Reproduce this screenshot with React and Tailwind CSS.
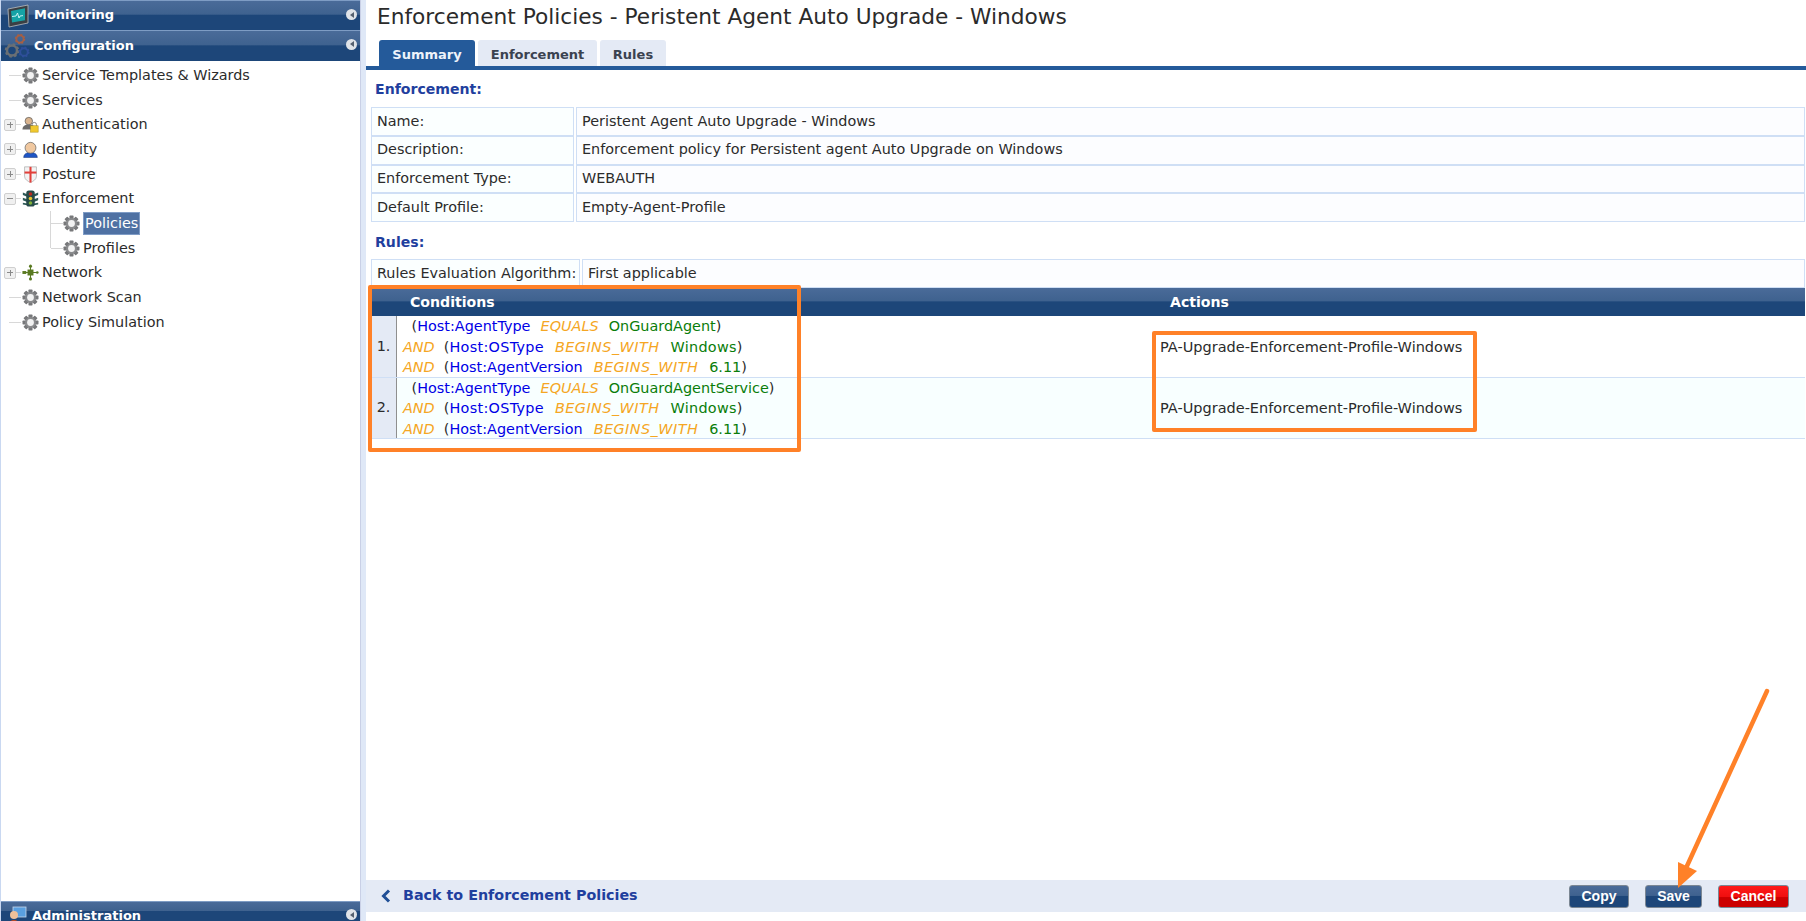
import React from "react";

const BAR = "bg-[linear-gradient(#4a6b99_0%,#3f628f_45%,#1d4679_50%,#1d4679_100%)]";

function Gear({ className = "" }) {
  const teeth = [0, 45, 90, 135, 180, 225, 270, 315];
  return (
    <svg viewBox="0 0 20 20" className={`w-[17px] h-[17px] shrink-0 ${className}`}>
      {teeth.map((a) => (
        <rect key={a} x="7.6" y="0.6" width="4.8" height="5" rx="0.8" fill="#77787a" transform={`rotate(${a} 10 10)`} />
      ))}
      <circle cx="10" cy="10" r="6.4" fill="#8a8b8d" />
      <circle cx="10" cy="10" r="4" fill="#f2f2f2" />
    </svg>
  );
}

function Expander({ minus }) {
  return (
    <span className="w-3 h-3 border border-[#cfcfcf] bg-[#f0f0f0] rounded-[2px] flex items-center justify-center relative shrink-0">
      <span className="w-[6px] h-px bg-[#8a8a8a]" />
      {!minus && <span className="absolute w-px h-[6px] bg-[#8a8a8a]" />}
    </span>
  );
}

function AuthIcon() {
  return (
    <svg viewBox="0 0 20 20" className="w-[17px] h-[17px] shrink-0">
      <circle cx="8" cy="6" r="4.4" fill="#d9b48f" stroke="#555" strokeWidth="0.8" />
      <path d="M0.5 16c0-4 3-6 7.5-6s7.5 2 7.5 6z" fill="#6b6b6b" />
      <rect x="10" y="11.5" width="9" height="7.5" fill="#f0c82e" stroke="#a98a12" strokeWidth="0.6" />
      <path d="M12 11.5V10a2.5 2.5 0 0 1 5 0v1.5" fill="none" stroke="#777" strokeWidth="1" />
    </svg>
  );
}

function IdentityIcon() {
  return (
    <svg viewBox="0 0 20 20" className="w-[17px] h-[17px] shrink-0">
      <path d="M2 19.5c0-4 3-6 8-6s8 2 8 6z" fill="#1f55c4" stroke="#123070" strokeWidth="0.6" />
      <circle cx="10" cy="8" r="6.4" fill="#f0c8a0" stroke="#5a5a5a" strokeWidth="0.8" />
    </svg>
  );
}

function PostureIcon() {
  return (
    <svg viewBox="0 0 20 20" className="w-[17px] h-[17px] shrink-0">
      <path d="M3 1h14v11c0 4-4 6-7 7.5-3-1.500-7-3.500-7-7.500z" fill="#f3f3f3" stroke="#a8a8a8" strokeWidth="0.8" />
      <rect x="8.800" y="1" width="2.400" height="18.500" fill="#e2403a" />
      <rect x="3" y="6.500" width="14" height="2.400" fill="#e2403a" />
    </svg>
  );
}

function TrafficIcon() {
  return (
    <svg viewBox="0 0 20 20" className="w-[17px] h-[17px] shrink-0">
      <path d="M1 3l5 2v3L1 6zM19 3l-5 2v3l5-2zM1 9l5 2v3L1 12zM19 9l-5 2v3l5-2zM1 15l5 1v2L1 17zM19 15l-5 1v2l5-1z" fill="#2f5a58" />
      <rect x="5" y="0.500" width="10" height="19" rx="3" fill="#274a48" />
      <circle cx="10" cy="4.800" r="2.100" fill="#b92a20" />
      <circle cx="10" cy="10" r="2.100" fill="#e9c52c" />
      <circle cx="10" cy="15.200" r="2.100" fill="#7fb23a" />
    </svg>
  );
}

function NetworkIcon() {
  return (
    <svg viewBox="0 0 20 20" className="w-[17px] h-[17px] shrink-0">
      <path d="M10 2v16M1.500 10h17" stroke="#5a7a22" strokeWidth="1.200" />
      <rect x="6.500" y="6.500" width="7" height="7" fill="#5a7a22" />
      <circle cx="10" cy="2.500" r="1.800" fill="#5a7a22" />
      <circle cx="10" cy="17.500" r="1.800" fill="#5a7a22" />
      <rect x="0.500" y="8.300" width="4.500" height="3.400" fill="#5a7a22" />
      <circle cx="18" cy="10" r="1.500" fill="#5a7a22" />
    </svg>
  );
}

function MonitorIcon() {
  return (
    <svg viewBox="0 0 22 24" className="w-[22px] h-[24px] shrink-0">
      <path d="M1 5l20-4v18L2 23z" fill="#3a3f44" stroke="#b9bcbf" strokeWidth="0.800" />
      <path d="M4 7l14-2.800v12L5 18.500z" fill="#15a3a6" />
      <path d="M5 12.500l4-.5 1.500-3 1.500 5 1-2 3-.4" fill="none" stroke="#d8fbfb" strokeWidth="0.900" />
    </svg>
  );
}

function GearsIcon() {
  const cog = (cx, cy, r, color) => (
    <g>
      <circle cx={cx} cy={cy} r={r} fill="none" stroke={color} strokeWidth={r * 0.5} />
      <circle cx={cx} cy={cy} r={r * 1.25} fill="none" stroke={color} strokeWidth={r * 0.4} strokeDasharray={`${r * 0.5} ${r * 0.48}`} />
    </g>
  );
  return (
    <svg viewBox="0 0 28 28" className="w-7 h-7 shrink-0">
      {cog(16, 7, 3.6, "#a85f42")}
      {cog(8, 18.500, 5, "#6a6f74")}
      {cog(20, 20, 3.8, "#2f4f9a")}
    </svg>
  );
}

function AdminIcon() {
  return (
    <svg viewBox="0 0 20 24" className="w-[20px] h-[24px] shrink-0">
      <rect x="6" y="1" width="13" height="10" fill="#5aa0e0" stroke="#c7d6ea" strokeWidth="0.800" />
      <circle cx="7" cy="9" r="4" fill="#eec09a" />
      <path d="M1 22c0-5 2-8 6-8s6 3 6 8z" fill="#c44a20" />
    </svg>
  );
}

function BarChevron() {
  return (
    <span className="w-[11px] h-[11px] rounded-full bg-[#dfe3e8] flex items-center justify-center shrink-0">
      <span className="w-0 h-0 border-y-[3px] border-y-transparent border-r-[4px] border-r-[#55606e]" />
    </span>
  );
}

function AccordionBar({ icon, label, className = "", iconW = "w-[33px]", labelClass = "", chevronClass = "" }) {
  return (
    <div className={`flex items-center border-t border-[#7e9cc4] ${BAR} pr-[2px] overflow-hidden ${className}`}>
      <div className={`${iconW} flex justify-center shrink-0`}>{icon}</div>
      <span className={`text-white font-bold text-[13px] flex-1 ${labelClass}`}>{label}</span>
      <span className={`mr-px ${chevronClass}`}><BarChevron /></span>
    </div>
  );
}

function TreeRow({ child, expander, icon, label, selected, vline }) {
  return (
    <div className="h-[24.7px] flex items-center relative">
      <div className={`${child ? "w-[62px] pl-[50px]" : expander ? "w-[21px] pl-[3px]" : "w-[21px] pl-[8px]"} flex items-center shrink-0`}>
        {expander && <Expander minus={expander === "minus"} />}
        <span className={`${expander ? "w-[5px]" : "w-3"} h-px bg-[#d8d8d8]`} />
      </div>
      {icon}
      <span className={`${child ? "ml-[3px]" : "ml-[3px]"} text-[14.4px] leading-[21px] ${selected ? "bg-[#4f71a3] text-white px-px border border-[#7f9cc6]" : "text-[#2b2b2b]"}`}>{label}</span>
      {vline === "full" && <span className="absolute left-[49px] top-0 bottom-0 w-px bg-[#d8d8d8]" />}
      {vline === "half" && <span className="absolute left-[49px] top-0 h-1/2 w-px bg-[#d8d8d8]" />}
    </div>
  );
}

function InfoRow({ k, v, w = "w-[203px]", h = "h-[28.8px]" }) {
  return (
    <div className={`flex gap-[2px] ${h} text-[14.4px] text-[#2b2b2b]`}>
      <div className={`${w} shrink-0 flex items-center pl-[5px] bg-[#fbffff] border border-[#cfdff5]`}>{k}</div>
      <div className="flex-1 flex items-center pl-[5px] bg-[#fcfdff] border border-[#cfdff5]">{v}</div>
    </div>
  );
}

function Cond({ prefix, attr, attrClass = "", op, opClass = "", val, valClass = "" }) {
  return (
    <div className="h-[20.3px] leading-[20px] whitespace-pre">
      {prefix ? <span className="text-[#f5a623] italic">AND</span> : <span className="inline-block w-[4px]" />}
      <span className="text-[#2b2b2b]">{prefix ? "  (" : " ("}</span>
      <span className={`text-[#0000e6] ${attrClass}`}>{attr}</span>
      <span className={`text-[#f5a623] italic mx-px ${opClass}`}>{"  " + op + "  "}</span>
      <span className={`text-[#0a7d0a] ${valClass}`}>{val}</span>
      <span className="text-[#2b2b2b]">)</span>
    </div>
  );
}

function Rule({ n, val, shaded }) {
  return (
    <div className={`flex h-[61.500px] border-b border-[#cfdff5] text-[14.4px] ${shaded ? "bg-[#f8ffff]" : "bg-white"}`}>
      <div className="w-[26px] shrink-0 bg-[#e4eaf5] border-r border-[#8f8f8f] flex items-center justify-center text-[#2b2b2b]">{n}.</div>
      <div className="w-[759px] shrink-0 pl-[6px]">
        <Cond attr="Host:AgentType" op="EQUALS" val={val} />
        <Cond prefix attr="Host:OSType" attrClass="tracking-[0.3px]" op="BEGINS_WITH" opClass="tracking-[0.45px]" val="Windows" valClass="tracking-[0.3px]" />
        <Cond prefix attr="Host:AgentVersion" op="BEGINS_WITH" opClass="tracking-[0.45px]" val="6.11" />
      </div>
      <div className="flex-1 flex items-center pl-[4px] pt-[2px] text-[#2b2b2b] text-[14.5px]">PA-Upgrade-Enforcement-Profile-Windows</div>
    </div>
  );
}

function Btn({ w, red, children }) {
  return (
    <button className={`${w} h-[23px] rounded-[3px] border border-[#7b8794] text-white font-bold text-[14px] ${red ? "bg-[linear-gradient(#ff1a1a_0%,#f00f0f_50%,#cc0000_55%,#cc0000_100%)]" : BAR}`} style={{ fontFamily: '"Liberation Sans", Arial, sans-serif' }}>
      {children}
    </button>
  );
}

export default function App() {
  return (
    <div className="h-screen w-full flex overflow-hidden bg-white relative" style={{ fontFamily: '"DejaVu Sans", Verdana, sans-serif' }}>
      {/* Sidebar */}
      <aside className="w-[361px] shrink-0 flex flex-col border-l border-[#c9d8f1] border-r border-r-[#c9d0e6]">
        <AccordionBar icon={<MonitorIcon />} label="Monitoring" className="h-[30px]" labelClass="-translate-y-px" chevronClass="-translate-y-px" />
        <AccordionBar icon={<GearsIcon />} label="Configuration" className="h-[31px]" chevronClass="-translate-y-[2px]" />
        <div className="flex-1 pt-[2px]">
          <TreeRow icon={<Gear />} label="Service Templates & Wizards" />
          <TreeRow icon={<Gear />} label="Services" />
          <TreeRow expander="plus" icon={<AuthIcon />} label="Authentication" />
          <TreeRow expander="plus" icon={<IdentityIcon />} label="Identity" />
          <TreeRow expander="plus" icon={<PostureIcon />} label="Posture" />
          <TreeRow expander="minus" icon={<TrafficIcon />} label="Enforcement" />
          <TreeRow child vline="full" icon={<Gear />} label="Policies" selected />
          <TreeRow child vline="half" icon={<Gear />} label="Profiles" />
          <TreeRow expander="plus" icon={<NetworkIcon />} label="Network" />
          <TreeRow icon={<Gear />} label="Network Scan" />
          <TreeRow icon={<Gear />} label="Policy Simulation" />
        </div>
        <AccordionBar icon={<AdminIcon />} label="Administration" iconW="w-[31px]" className="h-[20px] items-start pt-[4px]" labelClass="leading-[20px]" chevronClass="translate-y-[3px]" />
      </aside>
      <div className="w-[5px] shrink-0 bg-[#dfe8f7]" />

      {/* Main */}
      <main className="flex-1 min-w-0 flex flex-col pb-[9px]">
        <h1 className="pl-[11px] h-[40px] pt-[1px] text-[21.7px] leading-[32px] text-[#2b2b2b] font-normal whitespace-nowrap">
          Enforcement Policies - Peristent Agent Auto Upgrade - Windows
        </h1>
        <div className="flex pl-[13px] gap-[3px] h-[26px] text-[13px] font-bold">
          <div className="w-[96px] rounded-t-[3px] bg-[#245a9a] text-[#eef3fa] flex items-center justify-center pt-[3px]">Summary</div>
          <div className="w-[119px] rounded-t-[3px] bg-[#e4eaf5] text-[#3a4250] flex items-center justify-center pt-[3px]">Enforcement</div>
          <div className="w-[66px] rounded-t-[3px] bg-[#e4eaf5] text-[#3a4250] flex items-center justify-center pt-[3px]">Rules</div>
        </div>
        <div className="h-[4px] bg-[#245a9a]" />

        <div className="flex-1 min-h-0 pl-[5px] pr-[1px]">
          <h2 className="text-[14.1px] font-bold text-[#1f3f9e] h-[37px] pt-[9px] pl-[4px] leading-[20px]">Enforcement:</h2>
          <div className="flex flex-col">
            <InfoRow k="Name:" v="Peristent Agent Auto Upgrade - Windows" />
            <InfoRow k="Description:" v="Enforcement policy for Persistent agent Auto Upgrade on Windows" />
            <InfoRow k="Enforcement Type:" v="WEBAUTH" />
            <InfoRow k="Default Profile:" v="Empty-Agent-Profile" />
          </div>
          <h2 className="text-[14.1px] font-bold text-[#1f3f9e] h-[36.800px] pt-[10px] pl-[4px] leading-[20px]">Rules:</h2>
          <InfoRow k="Rules Evaluation Algorithm:" v="First applicable" w="w-[209px]" h="h-[29.500px]" />
          <div className={`flex h-[28px] items-center text-white font-bold text-[14.1px] pt-[1px] ${BAR}`}>
            <div className="w-[785px] pl-[39px] shrink-0">Conditions</div>
            <div className="flex-1 pl-[14px]">Actions</div>
          </div>
          <Rule n={1} val="OnGuardAgent" />
          <Rule n={2} val="OnGuardAgentService" shaded />
        </div>

        <div className="h-[32px] bg-[#e4eaf5] flex items-center">
          <div className="flex items-center pl-[15px] flex-1 text-[#1f3f9e] font-bold text-[14.3px]">
            <svg viewBox="0 0 10 14" className="w-[10px] h-[14px] mr-[12px]"><path d="M8 1.500L2.500 7 8 12.500" fill="none" stroke="#1f4f96" strokeWidth="3" /></svg>
            Back to Enforcement Policies
          </div>
          <div className="flex items-center pr-[17px] gap-[16px]">
            <Btn w="w-[60px]">Copy</Btn>
            <Btn w="w-[57px]">Save</Btn>
            <Btn w="w-[71px]" red>Cancel</Btn>
          </div>
        </div>
      </main>

      {/* Annotations over the page */}
      <div className="absolute left-[368px] top-[285px] w-[433px] h-[167px] border-[4px] border-[#ff8128] rounded-[2px] pointer-events-none" />
      <div className="absolute left-[1152px] top-[331px] w-[325px] h-[101px] border-[4px] border-[#ff8128] rounded-[2px] pointer-events-none" />
      <svg className="absolute left-[1660px] top-[680px] w-[120px] h-[220px] pointer-events-none" viewBox="0 0 120 220">
        <path d="M107 11L27 186" stroke="#ff8128" strokeWidth="4.500" strokeLinecap="round" />
        <path d="M18 208L18 182L37 191Z" fill="#ff8128" />
      </svg>
    </div>
  );
}
